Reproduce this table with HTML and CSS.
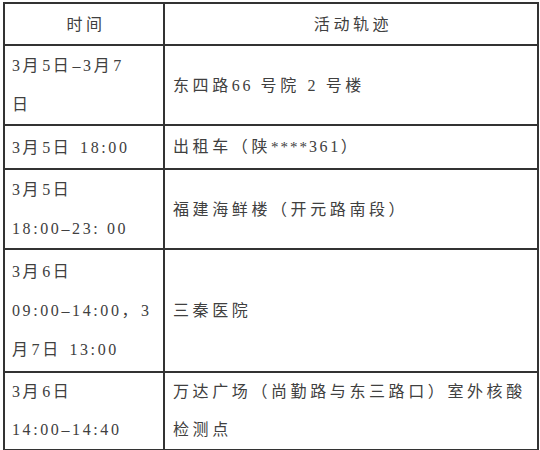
FILE: index.html
```html
<!DOCTYPE html>
<html lang="zh-CN">
<head>
<meta charset="utf-8">
<title>活动轨迹</title>
<link rel="stylesheet" href="styles.css">
</head>
<body>
<table class="track">
  <colgroup>
    <col class="c-time">
    <col class="c-place">
  </colgroup>
  <thead>
    <tr class="r-head">
      <th>时间</th>
      <th>活动轨迹</th>
    </tr>
  </thead>
  <tbody>
    <tr class="r1">
      <td><span class="n">3</span>月<span class="n">5</span>日<span class="n">–3</span>月<span class="n">7</span><br>日</td>
      <td>东四路<span class="n">66</span> 号院 <span class="n">2</span> 号楼</td>
    </tr>
    <tr class="r2">
      <td><span class="n">3</span>月<span class="n">5</span>日 <span class="n">18:00</span></td>
      <td>出租车（陕<span class="star">****</span><span class="n">361</span>）</td>
    </tr>
    <tr class="r3">
      <td><span class="n">3</span>月<span class="n">5</span>日<br><span class="n">18:00–23: 00</span></td>
      <td>福建海鲜楼（开元路南段）</td>
    </tr>
    <tr class="r4">
      <td><span class="n">3</span>月<span class="n">6</span>日<br><span class="n">09:00–14:00</span>，<span class="n">3</span><br>月<span class="n">7</span>日 <span class="n">13:00</span></td>
      <td>三秦医院</td>
    </tr>
    <tr class="r5">
      <td><span class="n">3</span>月<span class="n">6</span>日<br><span class="n">14:00–14:40</span></td>
      <td>万达广场（尚勤路与东三路口）室外核酸<br>检测点</td>
    </tr>
  </tbody>
</table>
</body>
</html>
```

FILE: styles.css
```css
html, body {
  margin: 0;
  padding: 0;
  background: #ffffff;
}

body {
  padding: 2px 3px 0 3px;
}

.track {
  border-collapse: collapse;
  width: 534px;
  table-layout: fixed;
  font-family: "Liberation Serif", "Noto Sans CJK SC", serif;
  font-size: 16px;
  font-weight: normal;
  letter-spacing: 3.6px;
  color: #404040;
  border: 2px solid #2a2a2a;
}

.c-time {
  width: 160px;
}

.c-place {
  width: 374px;
}

.track th,
.track td {
  border: 2px solid #333333;
  padding: 0 0 0 7px;
  vertical-align: middle;
  text-align: left;
  line-height: 39px;
  white-space: nowrap;
  overflow: hidden;
}

.track td + td {
  padding-left: 8px;
}

.track th {
  font-weight: normal;
  text-align: center;
  padding: 0 0 0 4px;
}

.n {
  font-family: "Liberation Serif", serif;
  letter-spacing: 2.6px;
}

.star {
  font-family: "Liberation Serif", serif;
  font-size: 15px;
  letter-spacing: 2px;
}

.r-head { height: 42px; }
.r1 { height: 80px; }
.r2 { height: 44px; }
.r3 { height: 78px; }
.r4 { height: 123px; }
.r5 { height: 76px; }
.r5 td { line-height: 38px; }
```
